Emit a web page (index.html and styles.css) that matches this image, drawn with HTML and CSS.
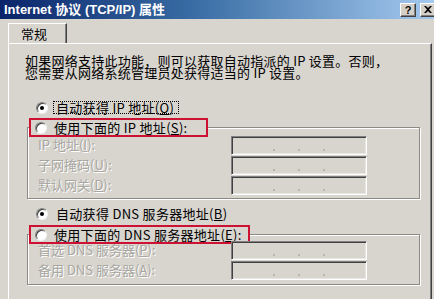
FILE: index.html
```html
<!DOCTYPE html>
<html lang="zh-CN">
<head>
<meta charset="utf-8">
<title>Internet 协议 (TCP/IP) 属性</title>
<link rel="stylesheet" href="styles.css">
</head>
<body>
<div class="window">
  <div class="titlebar">
    <span class="title">Internet 协议 (TCP/IP) 属性</span>
    <span class="tbtns">
      <span class="tbtn q">?</span>
      <span class="tbtn"><svg width="8" height="7" viewBox="0 0 8 7"><path d="M0 0h2l2 2 2-2h2L5 3.5 8 7H6L4 5 2 7H0l3-3.5z" fill="#000"/></svg></span>
    </span>
  </div>
  <div class="tabs"><span class="tab">常规</span></div>
  <div class="panel">
    <p class="intro">如果网络支持此功能，则可以获取自动指派的 IP 设置。否则，<br>您需要从网络系统管理员处获得适当的 IP 设置。</p>

    <div class="radio-row"><span class="radio checked"></span><span class="label focus">自动获得 IP 地址(<u>O</u>)</span></div>

    <fieldset class="group">
      <legend class="mark mark-ip"><span class="radio"></span><span class="label">使用下面的 IP 地址(<u>S</u>):</span></legend>
      <div class="rows">
        <span class="dlabel">IP 地址(<u>I</u>):</span>
        <span class="ipbox"><i></i><i></i><i></i></span>
        <span class="dlabel">子网掩码(<u>U</u>):</span>
        <span class="ipbox"><i></i><i></i><i></i></span>
        <span class="dlabel">默认网关(<u>D</u>):</span>
        <span class="ipbox"><i></i><i></i><i></i></span>
      </div>
    </fieldset>

    <div class="radio-row dns"><span class="radio checked"></span><span class="label">自动获得 DNS 服务器地址(<u>B</u>)</span></div>

    <fieldset class="group group2">
      <legend class="mark"><span class="radio"></span><span class="label">使用下面的 DNS 服务器地址(<u>E</u>):</span></legend>
      <div class="rows rows-tight">
        <span class="dlabel">首选 DNS 服务器(<u>P</u>):</span>
        <span class="ipbox"><i></i><i></i><i></i></span>
        <span class="dlabel">备用 DNS 服务器(<u>A</u>):</span>
        <span class="ipbox"><i></i><i></i><i></i></span>
      </div>
    </fieldset>
  </div>
</div>
</body>
</html>
```
FILE: styles.css
```css
html, body {
  margin: 0;
  padding: 0;
  overflow: hidden;
  background: #d8d5cf;
}
body {
  font-family: "Noto Sans CJK SC", "Liberation Sans", sans-serif;
  font-size: 13px;
  color: #000;
}
.window {
  width: 434px;
  height: 299px;
  overflow: hidden;
}
.titlebar {
  height: 19px;
  margin-right: -3px;
  padding: 0 1px 0 4px;
  display: flex;
  align-items: center;
  justify-content: space-between;
  background: linear-gradient(to right, #0a246a 0%, #3a6ea5 45%, #a6caf0 100%);
}
.title {
  color: #fff;
  font-family: "Liberation Sans", "Noto Sans CJK SC", sans-serif;
  font-weight: bold;
  font-size: 13px;
  line-height: 19px;
}
.tbtns {
  display: flex;
  gap: 4px;
}
.tbtn {
  width: 14px;
  height: 12px;
  background: #d4d0c8;
  border: 1px solid;
  border-color: #fff #404040 #404040 #fff;
  box-shadow: inset -1px -1px 0 #808080;
  display: flex;
  align-items: center;
  justify-content: center;
  font-family: "Liberation Sans", sans-serif;
  font-weight: bold;
  font-size: 11px;
  line-height: 12px;
}
.tabs {
  margin-top: 4px;
  padding-left: 8px;
  display: flex;
}
.tab {
  height: 19px;
  padding: 0 19px 0 12px;
  border-top: 1px solid #fff;
  border-left: 1px solid #fff;
  border-right: 1px solid #404040;
  box-shadow: inset -1px 0 0 #808080;
  line-height: 19px;
  font-size: 13px;
}
.panel {
  box-sizing: border-box;
  margin: 0 2px 0 8px;
  border-top: 1px solid #fff;
  border-left: 1px solid #fff;
  border-right: 1px solid #404040;
  box-shadow: inset -1px 0 0 #808080;
  padding-top: 11px;
  height: 256px;
}
.intro {
  margin: 0;
  padding-left: 16px;
  line-height: 12px;
  font-size: 13px;
  letter-spacing: 0.25px;
  white-space: nowrap;
}
.radio-row {
  margin-top: 22px;
  padding-left: 27px;
  display: flex;
  align-items: center;
  gap: 5px;
  height: 13px;
}
.radio-row.dns {
  margin-top: 8px;
}
.radio-row.dns .label {
  padding-left: 3px;
}
.radio {
  flex: none;
  width: 10px;
  height: 10px;
  border-radius: 50%;
  border: 1px solid;
  border-color: #808080 #f4f4f4 #f4f4f4 #808080;
  background: #fff;
  box-shadow: inset 1px 1px 0 #404040;
  display: flex;
  align-items: center;
  justify-content: center;
}
.radio.checked::after {
  content: "";
  width: 4px;
  height: 4px;
  border-radius: 50%;
  background: #000;
}
.label {
  line-height: 11px;
  white-space: nowrap;
  letter-spacing: 0.3px;
}
.label.focus {
  border: 1px dotted #000;
  padding: 0 4px 0 2px;
}
.group {
  margin: 4px 11px 0 18px;
  padding: 0 0 3px 0;
  min-width: 0;
  border: 1px solid #8c8a84;
  box-shadow: inset 1px 1px 0 #fff, 1px 1px 0 #fff;
}
.group2 {
  margin-top: 5px;
  padding-bottom: 4px;
}
.mark {
  margin-left: 1px;
  padding: 0 6px 0 4px;
  height: 15px;
  border: 2px solid #cc1133;
  background: #d8d5cf;
  display: flex;
  align-items: center;
  gap: 7px;
}
.mark-ip {
  padding-right: 18px;
}
.rows {
  display: grid;
  grid-template-columns: 193px 136px;
  grid-auto-rows: 20px;
  align-items: center;
  padding-left: 10px;
  margin-top: -2px;
}
.rows-tight {
  margin-top: -4px;
}
.dlabel {
  color: #a8a6a0;
  text-shadow: 1px 1px 0 #fff;
  white-space: nowrap;
  line-height: 14px;
}
.ipbox {
  height: 14px;
  border: 1px solid;
  border-color: #808080 #fff #fff #808080;
  box-shadow: inset 1px 1px 0 #404040, inset -1px -1px 0 #e8e6e2;
  background: #d8d5cf;
  display: flex;
  justify-content: space-evenly;
  align-items: flex-end;
  padding: 0 18px 3px 18px;
}
.ipbox i {
  width: 2px;
  height: 2px;
  background: #b8b6b0;
}
```
